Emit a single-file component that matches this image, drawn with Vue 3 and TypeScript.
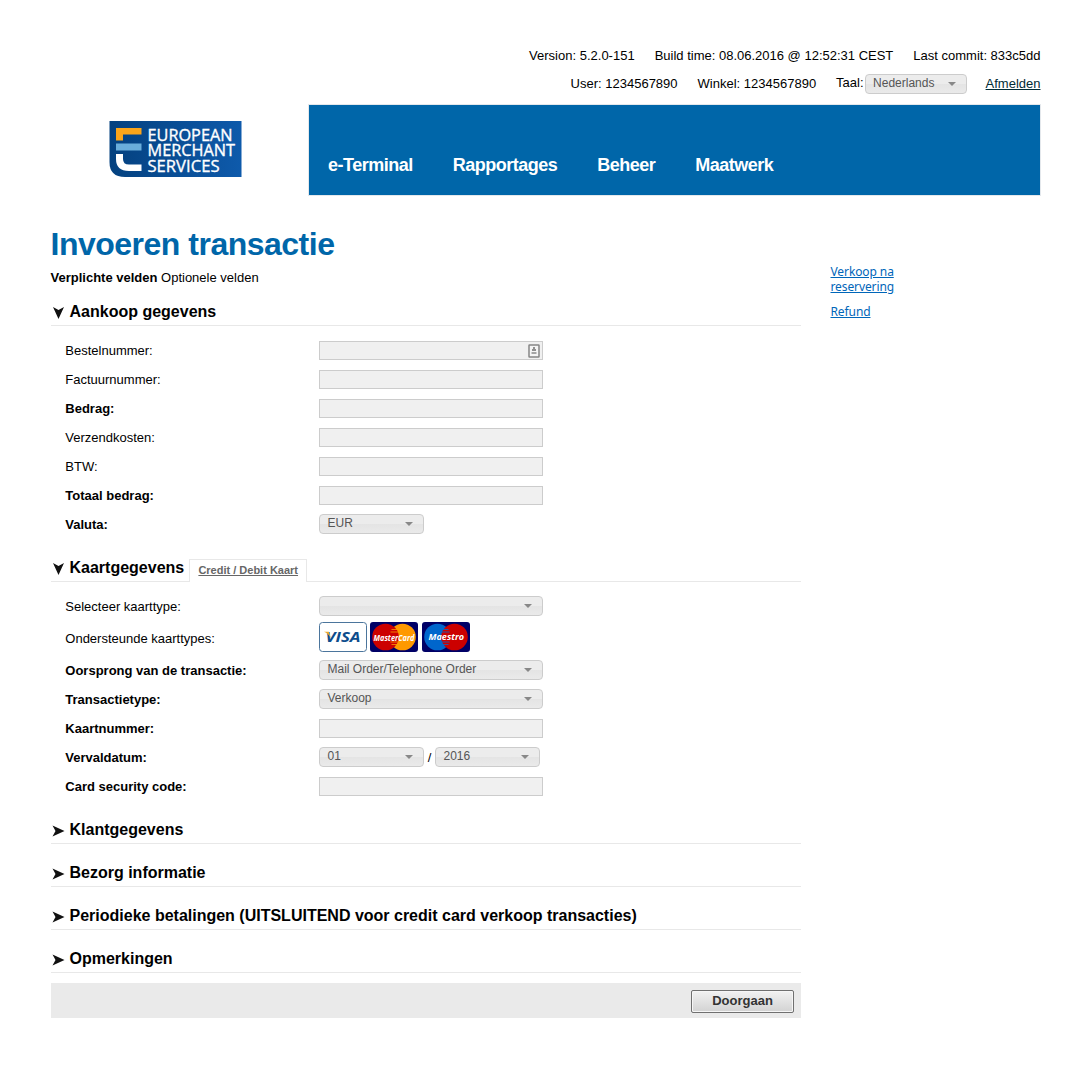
<script setup lang="ts">
interface Field {
  label: string
  required?: boolean
  kind: 'input' | 'select' | 'cards' | 'expiry'
  value?: string
  short?: boolean
  icon?: boolean
}

const nav: string[] = ['e-Terminal', 'Rapportages', 'Beheer', 'Maatwerk']

const purchase: Field[] = [
  { label: 'Bestelnummer:', kind: 'input', icon: true },
  { label: 'Factuurnummer:', kind: 'input' },
  { label: 'Bedrag:', kind: 'input', required: true },
  { label: 'Verzendkosten:', kind: 'input' },
  { label: 'BTW:', kind: 'input' },
  { label: 'Totaal bedrag:', kind: 'input', required: true },
  { label: 'Valuta:', kind: 'select', required: true, value: 'EUR', short: true },
]

const card: Field[] = [
  { label: 'Selecteer kaarttype:', kind: 'select', value: '' },
  { label: 'Ondersteunde kaarttypes:', kind: 'cards' },
  { label: 'Oorsprong van de transactie:', kind: 'select', required: true, value: 'Mail Order/Telephone Order' },
  { label: 'Transactietype:', kind: 'select', required: true, value: 'Verkoop' },
  { label: 'Kaartnummer:', kind: 'input', required: true },
  { label: 'Vervaldatum:', kind: 'expiry', required: true },
  { label: 'Card security code:', kind: 'input', required: true },
]

const sections: { title: string; tab?: string; fields: Field[] }[] = [
  { title: 'Aankoop gegevens', fields: purchase },
  { title: 'Kaartgegevens', tab: 'Credit / Debit Kaart', fields: card },
  { title: 'Klantgegevens', fields: [] },
  { title: 'Bezorg informatie', fields: [] },
  { title: 'Periodieke betalingen (UITSLUITEND voor credit card verkoop transacties)', fields: [] },
  { title: 'Opmerkingen', fields: [] },
]
</script>

<template>
  <div class="page">
    <header>
      <div class="meta">
        <span>Version: 5.2.0-151</span>
        <span>Build time: 08.06.2016 @ 12:52:31 CEST</span>
        <span>Last commit: 833c5dd</span>
      </div>
      <div class="meta second">
        <span>User: 1234567890</span>
        <span>Winkel: 1234567890</span>
        <span class="lang">Taal:<span class="select lang-select"><span>Nederlands</span><i class="caret"></i></span></span>
        <a class="logout">Afmelden</a>
      </div>
      <div class="banner">
        <div class="brand">
          <svg class="logo" width="133" height="56" viewBox="0 0 133 56">
            <defs>
              <linearGradient id="logoBg" x1="0" y1="0" x2="1" y2="0">
                <stop offset="0" stop-color="#04417f" />
                <stop offset="1" stop-color="#0e5aab" />
              </linearGradient>
            </defs>
            <path d="M.500 0H132.500V56H16Q.500 56 .500 41Z" fill="url(#logoBg)" />
            <path d="M7 7H32.500V13.500H14V19.500H7Z" fill="#fba51a" />
            <path d="M7 22.500H32.500V29.500H7Z" fill="#6aaedb" />
            <path d="M7 33H14V38Q14 43.500 20 43.500H32.500V50H20Q7 50 7 38Z" fill="#fff" />
            <g class="logo-text" fill="#fff" stroke="#fff" stroke-width=".35">
              <text x="38.500" y="19.800" textLength="85" lengthAdjust="spacingAndGlyphs">EUROPEAN</text>
              <text x="38.500" y="35.200" textLength="87.500" lengthAdjust="spacingAndGlyphs">MERCHANT</text>
              <text x="38.500" y="50.600" textLength="72" lengthAdjust="spacingAndGlyphs">SERVICES</text>
            </g>
          </svg>
        </div>
        <nav>
          <a v-for="item in nav" :key="item">{{ item }}</a>
        </nav>
      </div>
    </header>

    <div class="body">
      <main>
        <h1>Invoeren transactie</h1>
        <p class="legend"><b>Verplichte velden</b> Optionele velden</p>

        <section v-for="s in sections" :key="s.title">
          <div class="head">
            <svg class="arrow" :class="{ open: s.fields.length }" width="13" height="12" viewBox="0 0 13 12">
              <path d="M.500 .500L12.500 6L.500 11.500L3.500 6Z" fill="#111" />
            </svg>
            <h2>{{ s.title }}</h2>
            <div v-if="s.tab" class="tab"><a>{{ s.tab }}</a></div>
          </div>
          <div v-if="s.fields.length" class="fields">
            <div v-for="f in s.fields" :key="f.label" class="row" :class="{ tall: f.kind === 'cards' }">
              <label :class="{ required: f.required }">{{ f.label }}</label>
              <div v-if="f.kind === 'input'" class="input">
                <svg v-if="f.icon" width="12" height="14" viewBox="0 0 12 14">
                  <rect x="1" y="1" width="10" height="12" rx=".5" fill="#f4f4f4" stroke="#858585" stroke-width="1.500" />
                  <path d="M5 3h2v2h1v2H4v-2h1Z" fill="#909090" />
                  <path d="M3.500 8h5v2h-5Z" fill="#a4a4a4" />
                </svg>
              </div>
              <div v-else-if="f.kind === 'select'" class="select" :class="{ short: f.short }">
                <span>{{ f.value }}</span><i class="caret"></i>
              </div>
              <div v-else-if="f.kind === 'expiry'" class="expiry">
                <div class="select short"><span>01</span><i class="caret"></i></div>
                <span class="slash">/</span>
                <div class="select short"><span>2016</span><i class="caret"></i></div>
              </div>
              <div v-else class="cards">
                <svg width="48" height="30" viewBox="0 0 48 30">
                  <rect x=".5" y=".5" width="47" height="29" rx="3" fill="#fff" stroke="#4b759c" />
                  <text class="visa" x="6.500" y="20" textLength="35" lengthAdjust="spacingAndGlyphs" fill="#0d4d8c">VISA</text>
                  <path d="M5 9.800H9.800L11.800 16Q9.500 11.500 5 9.800Z" fill="#e9a92c" />
                </svg>
                <svg width="48" height="30" viewBox="0 0 48 30">
                  <rect width="48" height="30" rx="3" fill="#000066" />
                  <circle cx="32.500" cy="15" r="13.300" fill="#ff9900" />
                  <circle cx="15.500" cy="15" r="13.300" fill="#cc0000" />
                  <path d="M21.500 7.500h6M20.500 10h8M20.500 20h8M21.500 22.500h6" stroke="#f90" stroke-width=".8" />
                  <text class="mc" x="3.500" y="18.500" textLength="41" lengthAdjust="spacingAndGlyphs" fill="#fff">MasterCard</text>
                </svg>
                <svg class="last" width="48" height="30" viewBox="0 0 48 30">
                  <rect width="48" height="30" rx="3" fill="#000066" />
                  <circle cx="15.500" cy="15" r="13.300" fill="#0066cc" />
                  <circle cx="32.500" cy="15" r="13.300" fill="#cc0000" />
                  <path d="M20.500 7.500h6M19.500 10h8M19.500 20h8M20.500 22.500h6" stroke="#06c" stroke-width=".8" />
                  <text class="mc" x="6.500" y="18.300" textLength="35.500" lengthAdjust="spacingAndGlyphs" fill="#fff">Maestro</text>
                </svg>
              </div>
            </div>
          </div>
        </section>

        <div class="actions"><button type="button">Doorgaan</button></div>
      </main>

      <aside>
        <a>Verkoop na<br />reservering</a>
        <a>Refund</a>
      </aside>
    </div>
  </div>
</template>

<style>
body {
  margin: 0;
  background: #fff;
}
</style>

<style scoped>
.page {
  box-sizing: border-box;
  width: 1091px;
  height: 1068px;
  padding: 41px 50px 0 51px;
  font: 13px "Liberation Sans", Arial, sans-serif;
  color: #000;
}
.meta {
  display: flex;
  justify-content: flex-end;
  gap: 20px;
  height: 28px;
  padding-right: 0.5px;
  line-height: 29px;
  white-space: nowrap;
}
.second {
  height: 35px;
}
.lang {
  display: flex;
}
.lang,
.lang > .select {
  line-height: 27px;
}
.logout {
  color: #012b35;
  text-decoration: underline;
}
.banner {
  display: flex;
  height: 92px;
}
.brand {
  width: 257px;
  padding: 17px 0 0 58px;
  box-sizing: border-box;
}
.logo {
  display: block;
}
.logo-text {
  font: 17px "Open Sans", "Noto Sans", sans-serif;
}
nav {
  flex: 1;
  display: flex;
  gap: 40px;
  box-sizing: border-box;
  padding: 49px 0 0 19px;
  border: 1px solid #e4e8ec;
  background: #0066a9;
  color: #fff;
  font-size: 18px;
  font-weight: bold;
  letter-spacing: -0.5px;
  line-height: 22px;
}
.body {
  display: flex;
}
main {
  width: 750px;
}
h1 {
  margin: 0 0 0 -0.5px;
  padding-top: 28px;
  height: 40px;
  line-height: 40px;
  font-size: 32px;
  letter-spacing: -0.5px;
  color: #0066a9;
  white-space: nowrap;
}
.legend {
  margin: 0 0 0 -0.5px;
  height: 21px;
  padding-top: 4px;
  line-height: 19px;
}
.legend + section .head {
  height: 37px;
}
.head {
  box-sizing: border-box;
  display: flex;
  align-items: flex-end;
  height: 43px;
  border-bottom: 1px solid #e8e8e8;
}
.arrow {
  margin: 0 4.500px 6px 1px;
}
.arrow.open {
  transform: rotate(90deg);
}
h2 {
  margin: 0;
  padding-bottom: 3px;
  font-size: 16px;
  line-height: 20px;
  white-space: nowrap;
}
.tab {
  box-sizing: border-box;
  width: 118px;
  height: 23px;
  margin: 0 0 -1px 5px;
  border: 1px solid #e8e8e8;
  border-bottom: 0;
  background: #fff;
  text-align: center;
  line-height: 20px;
}
.tab a {
  font-size: 11px;
  font-weight: bold;
  color: #666;
  text-decoration: underline;
}
.fields {
  padding: 10px 0 0 14px;
}
.row {
  display: flex;
  align-items: center;
  height: 29px;
}
.row.tall {
  height: 35px;
}
label {
  box-sizing: border-box;
  width: 254px;
  padding-left: 0.3px;
}
.required {
  font-weight: bold;
}
.input {
  box-sizing: border-box;
  width: 224px;
  height: 19px;
  border: 1px solid #ccc;
  background: #f0f0f0;
  display: flex;
  align-items: center;
  justify-content: flex-end;
  padding-right: 2px;
}
.select {
  box-sizing: border-box;
  display: flex;
  justify-content: space-between;
  width: 224px;
  height: 20px;
  padding: 0 10px 0 7.500px;
  border: 1px solid #ccc;
  border-radius: 4px;
  background: linear-gradient(#ececec 0 50%, #e4e4e4 50%, #eaeaea);
  color: #555;
  font-size: 12px;
}
.select > span {
  line-height: 17px;
}
.select.short {
  width: 105px;
}
.select.lang-select {
  width: 102px;
  margin: 5px -1px 0 1px;
}
.row .select {
  margin-bottom: 1px;
}
.caret {
  margin-top: 7px;
  width: 0;
  height: 0;
  border: 4px solid transparent;
  border-top-color: #888;
  border-bottom: 0;
}
.expiry {
  display: flex;
  align-items: center;
}
.slash {
  width: 11px;
  text-align: center;
}
.cards {
  display: flex;
  gap: 3px;
  margin-bottom: 3px;
}
.cards svg {
  overflow: visible;
}
.cards .last {
  margin-left: 1px;
}
.visa {
  font: italic bold 14px "Open Sans", sans-serif;
}
.mc {
  font: italic bold 9.500px "Open Sans", sans-serif;
}
.actions {
  box-sizing: border-box;
  height: 35px;
  margin-top: 10px;
  padding: 7px 7px 0 0;
  background: #eaeaea;
  display: flex;
  justify-content: flex-end;
}
button {
  width: 103px;
  height: 23px;
  padding: 0 0 2px;
  border: 1px solid #707070;
  border-radius: 2px;
  background: linear-gradient(#f2f2f2, #d2d2d2);
  box-shadow: inset 0 0 0 1px #f6f6f6;
  color: #333;
  font: bold 13px "Liberation Sans", Arial, sans-serif;
}
aside {
  display: flex;
  flex-direction: column;
  gap: 10px;
  padding: 68px 0 0 29.500px;
  font: 12px/15px "Noto Sans", sans-serif;
  letter-spacing: -0.1px;
}
aside a {
  color: #0066b9;
  text-decoration: underline;
}
</style>
